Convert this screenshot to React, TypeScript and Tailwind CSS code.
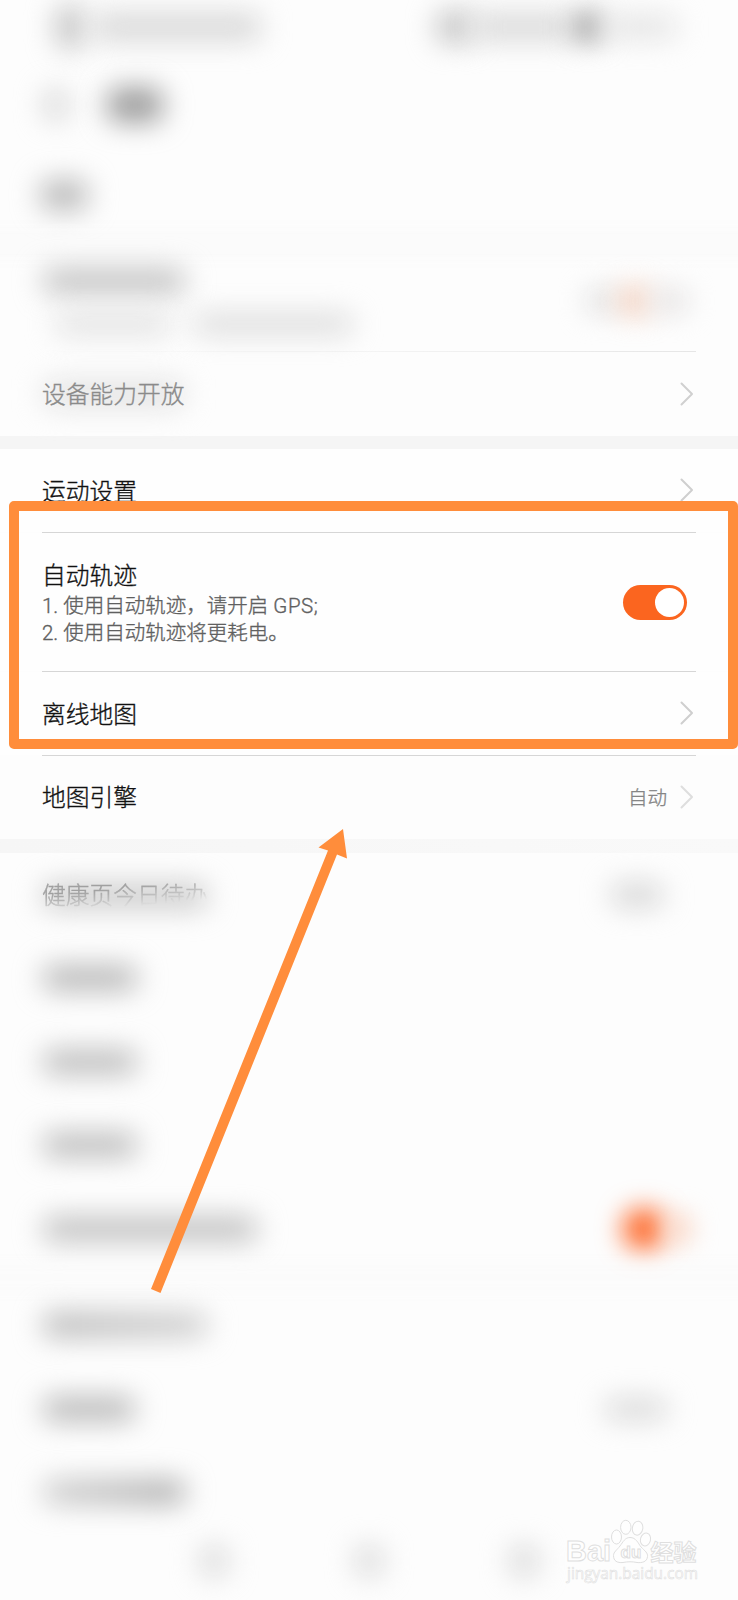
import clsx from 'clsx';

interface SmudgeProps {
  className?: string;
}

// Soft blurred bar standing in for hidden content
function Smudge({ className }: SmudgeProps) {
  return <div className={clsx('flex-shrink-0', className)} />;
}

function Chevron({ className }: { className?: string }) {
  return (
    <svg
      viewBox="0 0 14 24"
      className={clsx('w-[14px] h-6 mr-[2px] -mt-px flex-shrink-0', className)}
      fill="none"
      stroke="currentColor"
      strokeWidth="2"
      strokeLinecap="round"
      strokeLinejoin="round"
    >
      <path d="M1.5 1.5 L12 12 L1.5 22.5" />
    </svg>
  );
}

function Divider({ className = 'bg-[#d6d6d6]' }: { className?: string }) {
  return <div className={clsx('h-px mx-[42px] flex-shrink-0', className)} />;
}

function HiddenRow({ label, value }: { label: string; value?: string }) {
  return (
    <div className="h-[83.5px] flex items-center justify-between pl-[42px] pr-[70px]">
      <Smudge className={clsx('h-6 rounded-xl blur-[14px]', label)} />
      {value && <Smudge className={clsx('h-5 rounded-xl blur-[14px]', value)} />}
    </div>
  );
}

function Watermark() {
  return (
    <svg
      viewBox="0 0 140 70"
      className="absolute left-[562px] top-[1515px] w-[140px] h-[70px]"
      fill="#fefefe"
      stroke="#dfdfdf"
      strokeWidth="1"
    >
      <text x="4" y="46" fontSize="30" fontWeight="700" textLength="45" lengthAdjust="spacingAndGlyphs" fontFamily="Liberation Sans, sans-serif">
        Bai
      </text>
      <ellipse cx="54.5" cy="22" rx="5" ry="7" />
      <ellipse cx="63.8" cy="12.3" rx="5.2" ry="7" />
      <ellipse cx="75.6" cy="13.2" rx="5.2" ry="7" transform="rotate(10 75.6 13.2)" />
      <ellipse cx="83.5" cy="24.5" rx="5" ry="6.5" transform="rotate(15 83.5 24.5)" />
      <path d="M68 22.5 C74 22.5 76 28 79 32 C83 36 86 38 85.5 41.5 C85 47 80 48 75 47.5 C70 46.5 66 46.5 61 47.5 C55 48 51.5 46 51.5 40.5 C51.5 37 55 35 58 31 C61 27 63 22.5 68 22.5 Z" />
      <text x="58.5" y="43" fontSize="17" fontWeight="700" fontFamily="Liberation Sans, sans-serif">
        du
      </text>
      <text x="88.5" y="45.5" fontSize="23" fontWeight="700" textLength="46" fontFamily="Noto Sans CJK SC, sans-serif">
        经验
      </text>
      <text x="5" y="64" fontSize="16" strokeWidth="0.6" fontWeight="400" textLength="131" lengthAdjust="spacingAndGlyphs" fontFamily="Open Sans, sans-serif">
        jingyan.baidu.com
      </text>
    </svg>
  );
}

export default function App() {
  return (
    <div className="relative w-[738px] h-[1600px] overflow-hidden bg-[#fdfdfd] text-[#111] text-[23.75px] leading-none font-light [-webkit-text-stroke:0.35px] font-[Roboto,'Noto_Sans_CJK_SC',sans-serif]">
      {/* Status bar */}
      <div className="h-[54px] flex items-center justify-between pl-14 pr-[60px]">
        <div className="flex items-center gap-2">
          <Smudge className="w-7 h-11 rounded-xl bg-[#c4c4c4] blur-[14px]" />
          <Smudge className="w-[170px] h-7 rounded-xl bg-[#d8d8d8] blur-[14px]" />
        </div>
        <div className="flex items-center">
          <Smudge className="w-[38px] h-8 rounded-xl bg-[#c4c4c4] blur-[14px]" />
          <Smudge className="w-[98px] h-7 bg-[#dadada] blur-[14px]" />
          <Smudge className="w-8 h-8 rounded-xl bg-[#a8a8a8] blur-[13px]" />
          <Smudge className="w-[74px] h-6 rounded-xl bg-[#e4e4e4] blur-[14px]" />
        </div>
      </div>

      {/* Title bar */}
      <div className="h-[99px] flex items-center pt-0.5 pl-[44px] gap-[39px]">
        <Smudge className="w-6 h-8 rounded-xl bg-[#d4d4d4] blur-[14px]" />
        <Smudge className="w-[56px] h-[34px] rounded-xl bg-[#999] blur-[14px]" />
      </div>

      <div className="h-[84px] flex items-center pl-[40px]">
        <Smudge className="w-[48px] h-[30px] rounded-xl bg-[#b8b8b8] blur-[14px]" />
      </div>
      <div className="h-[14px] -mx-8 bg-[#f8f8f8] blur-[10px]" />

      <div className="h-[100px] flex items-center justify-between pl-[42px] pr-[48px]">
        <div className="flex flex-col gap-[21px]">
          <Smudge className="w-[144px] h-6 rounded-xl bg-[#c0c0c0] blur-[14px]" />
          <div className="flex gap-5 pl-[12px]">
            <Smudge className="w-[118px] h-5 rounded-xl bg-[#dfdfdf] blur-[14px]" />
            <Smudge className="w-[162px] h-5 rounded-xl bg-[#dadada] blur-[14px]" />
          </div>
        </div>
        <div className="flex items-center">
          <Smudge className="w-[34px] h-7 rounded-l-xl bg-[#e6e6e6] blur-[13px]" />
          <Smudge className="w-[34px] h-7 rounded-xl bg-[#f3ccb8] blur-[14px]" />
          <Smudge className="w-[38px] h-7 rounded-r-xl bg-[#e9e7e7] blur-[13px]" />
        </div>
      </div>
      <Divider className="bg-gradient-to-r from-transparent via-[#f4f4f4] to-[#e6e6e6]" />

      <div className="h-[84px] flex items-center justify-between px-[42px] text-[#8a8a8a]">
        <div className="relative pt-1">
          <div className="absolute inset-0 bg-[#e4e4e4] rounded-xl blur-[14px]" />
          <span className="relative">设备能力开放</span>
        </div>
        <Chevron className="text-[#d0d0d0]" />
      </div>
      <div className="h-[13px] bg-[#f5f5f5]" />

      {/* Sport section */}
      <div className="h-[83px] bg-[#fefefe] flex items-center justify-between px-[42px]">
        <span className="pt-1">运动设置</span>
        <Chevron className="text-[#cfcfcf]" />
      </div>
      <Divider />

      <div className="h-[138px] bg-[#fefefe] flex items-center justify-between pl-[42px] pr-[51px]">
        <div className="pt-[5px]">
          <div className="h-[31px] leading-[29px]">自动轨迹</div>
          <div className="text-[20.5px] leading-[27px] text-[#606060]">
            <div>1. 使用自动轨迹，请开启 <span className="tracking-[0.6px]">GPS;</span></div>
            <div>2. 使用自动轨迹将更耗电。</div>
          </div>
        </div>
        <div className="w-16 h-[35px] p-[3px] rounded-full bg-[#fb651f] flex items-center justify-end">
          <div className="w-[29px] h-[29px] rounded-full bg-white" />
        </div>
      </div>
      <Divider />

      <div className="h-[83px] bg-[#fefefe] flex items-center justify-between px-[42px]">
        <span className="pt-1">离线地图</span>
        <Chevron className="text-[#cfcfcf]" />
      </div>
      <Divider />

      <div className="h-[83px] flex items-center justify-between px-[42px]">
        <span className="pt-[3px]">地图引擎</span>
        <div className="flex items-center gap-[13px]">
          <span className="pt-[3px] text-[19.5px] text-[#858585]">自动</span>
          <Chevron className="text-[#dedede]" />
        </div>
      </div>
      <div className="h-[14px] bg-gradient-to-r from-[#f6f6f6] to-[#f9f9f9]" />

      {/* Hidden section */}
      <div className="h-[83.5px] flex items-center justify-between pl-[42px] pr-[74px]">
        <div className="relative pt-1">
          <div className="absolute inset-x-0 top-[2px] bottom-0 bg-[#cccccc] rounded-xl blur-[14px]" />
          <span className="relative text-[#a0a0a0] [mask-image:linear-gradient(174deg,#000_30%,transparent_76%)]">
            健康页今日待办
          </span>
        </div>
        <Smudge className="w-[54px] h-6 rounded-xl bg-[#d6d6d6] blur-[14px]" />
      </div>
      <HiddenRow label="w-[96px] bg-[#b4b4b4]" />
      <HiddenRow label="w-[96px] bg-[#bababa]" />
      <HiddenRow label="w-[96px] bg-[#bababa]" />
      <div className="h-[83.5px] flex items-center justify-between pl-[42px] pr-[46px]">
        <Smudge className="w-[216px] h-6 rounded-xl bg-[#bebebe] blur-[14px]" />
        <div className="flex items-center">
          <Smudge className="w-[44px] h-[42px] rounded-full bg-[#fd6a2c] blur-[13px]" />
          <Smudge className="w-[26px] h-[32px] rounded-xl bg-[#fad8c8] blur-[12px]" />
        </div>
      </div>
      <div className="h-[13px] -mx-8 bg-[#f9f9f9] blur-[10px]" />
      <HiddenRow label="w-[166px] bg-gradient-to-r from-[#b6b6b6] to-[#cdcdcd]" />
      <HiddenRow label="w-[94px] bg-[#b6b6b6]" value="w-[64px] bg-[#d6d6d6]" />
      <HiddenRow label="w-[144px] bg-gradient-to-r from-[#cdcdcd] to-[#a8a8a8]" />

      {/* Navigation keys */}
      <div className="h-[54px] flex items-center justify-between pl-[200px] pr-[200px]">
        <Smudge className="w-7 h-8 rounded-xl bg-[#dadada] blur-[14px]" />
        <Smudge className="w-7 h-8 rounded-xl bg-[#dadada] blur-[14px]" />
        <Smudge className="w-7 h-8 rounded-xl bg-[#d8d8d8] blur-[14px]" />
      </div>

      {/* Annotations */}
      <div className="absolute left-[9px] top-[501px] w-[729px] h-[247.5px] rounded-[5px] border-[10px] border-[#ff8d3b]" />
      <svg
        viewBox="0 0 200 470"
        className="absolute left-[150px] top-[826px] w-[200px] h-[470px]"
        fill="#ff8d3b"
      >
        <path d="M193 3 L197 32.5 L187 28.5 L10.5 467 L1 463 L178 24.5 L168.500 21.5 Z" />
      </svg>
      <Watermark />
    </div>
  );
}
